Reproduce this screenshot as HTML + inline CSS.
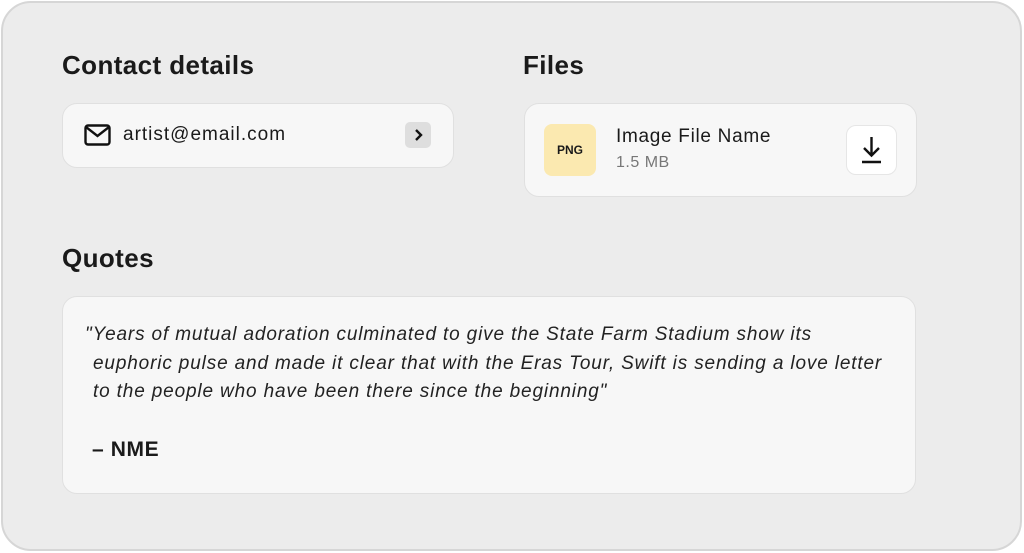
<!DOCTYPE html>
<html><head><style>
*{margin:0;padding:0;box-sizing:border-box}
body{width:1024px;height:553px;background:#fff;font-family:"Liberation Sans",sans-serif;color:#1a1a1a;position:relative;overflow:hidden}
.outer{position:absolute;left:1px;top:1px;width:1021px;height:550px;background:#ececec;border:2px solid #d6d6d6;border-radius:30px}
.h{position:absolute;font-weight:bold;font-size:26px;letter-spacing:0.4px;color:#1a1a1a}
.card{position:absolute;background:#f7f7f7;border:1px solid #e0e0e0;border-radius:15px}
.a{position:absolute}
</style></head><body>
<div class="outer"></div>
<div class="h" style="left:62px;top:50px">Contact details</div>
<div class="h" style="left:523px;top:50px">Files</div>
<div class="h" style="left:62px;top:243px">Quotes</div>

<div class="card" style="left:62px;top:103px;width:392px;height:65px"></div>
<svg class="a" style="left:84px;top:124px" width="27" height="22" viewBox="0 0 27 22"><rect x="1.5" y="1.5" width="24" height="19" rx="2.5" fill="none" stroke="#111" stroke-width="2.4"/><path d="M2 3 L13.5 12 L25 3" fill="none" stroke="#111" stroke-width="2.4"/></svg>
<div class="a" style="left:123px;top:124px;font-size:19px;letter-spacing:1px">artist@email.com</div>
<div class="a" style="left:405px;top:122px;width:26px;height:26px;background:#dedede;border-radius:5px"></div>
<svg class="a" style="left:405px;top:122px" width="26" height="26"><path d="M11 8 L16 13 L11 18" fill="none" stroke="#111" stroke-width="2.4"/></svg>

<div class="card" style="left:524px;top:103px;width:393px;height:94px"></div>
<div class="a" style="left:544px;top:124px;width:52px;height:52px;background:#fbe9b0;border-radius:8px;font-weight:bold;font-size:12px;line-height:52px;text-align:center">PNG</div>
<div class="a" style="left:616px;top:126px;font-size:19px;letter-spacing:0.7px">Image File Name</div>
<div class="a" style="left:616px;top:154px;font-size:16px;letter-spacing:0.5px;color:#777">1.5 MB</div>
<div class="a" style="left:846px;top:125px;width:51px;height:50px;background:#fff;border:1px solid #e6e6e6;border-radius:10px"></div>
<svg class="a" style="left:846px;top:125px" width="51" height="50"><path d="M25.5 12 V30 M18 23 L25.5 30.5 L33 23 M16 37 H35" fill="none" stroke="#111" stroke-width="2.4"/></svg>

<div class="card" style="left:62px;top:296px;width:854px;height:198px"></div>
<div class="a" style="left:85px;top:321px;font-size:19px;font-style:italic;line-height:28.5px;color:#222;letter-spacing:0.85px;white-space:nowrap">"Years of mutual adoration culminated to give the State Farm Stadium show its</div>
<div class="a" style="left:93px;top:349.5px;font-size:19px;font-style:italic;line-height:28.5px;color:#222;letter-spacing:0.85px;white-space:nowrap">euphoric pulse and made it clear that with the Eras Tour, Swift is sending a love letter<br>to the people who have been there since the beginning"</div>
<div class="a" style="left:92px;top:438px;font-size:21px;font-weight:bold;letter-spacing:0.6px">– NME</div>
</body></html>
